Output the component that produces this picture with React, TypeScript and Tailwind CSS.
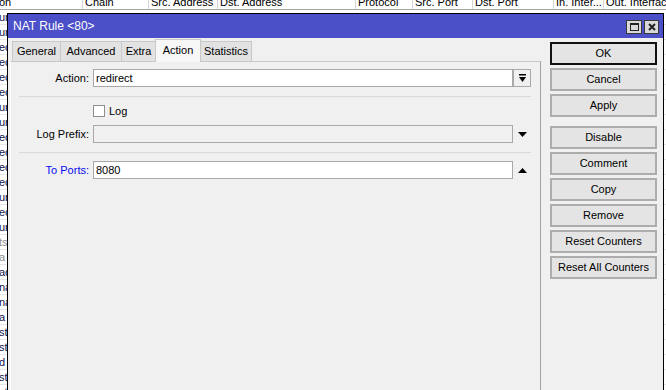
import React from 'react';

const headerCols = [
  { label: 'on', w: 84 },
  { label: 'Chain', w: 66 },
  { label: 'Src. Address', w: 69 },
  { label: 'Dst. Address', w: 138 },
  { label: 'Protocol', w: 57 },
  { label: 'Src. Port', w: 60 },
  { label: 'Dst. Port', w: 81 },
  { label: 'In. Inter...', w: 50 },
  { label: 'Out. Interface', w: 70 },
];

// visible left-edge fragments of the rule list behind the dialog
const rows: { frag: string; chain?: string; off?: boolean }[] = [
  { frag: 'un', chain: 'dstnat' }, { frag: 'un' }, { frag: 'ec' }, { frag: 'ec' }, { frag: 'ec' },
  { frag: 'ec' }, { frag: 'un' }, { frag: 'un' }, { frag: 'ec' }, { frag: 'ec' },
  { frag: 'ec' }, { frag: 'ec' }, { frag: 'un' }, { frag: 'ec' }, { frag: 'un' },
  { frag: 'ts', off: true }, { frag: 'a', off: true }, { frag: 'ac' }, { frag: 'na' }, { frag: 'na' },
  { frag: 'a' }, { frag: 'st' }, { frag: 'st' }, { frag: 'd' }, { frag: 'st' }, { frag: 'st' },
];

const tabs = [
  { label: 'General', w: 'w-[49px]' },
  { label: 'Advanced', w: 'w-[62px]' },
  { label: 'Extra', w: 'w-[35px]' },
  { label: 'Action', w: 'w-[46px]', active: true },
  { label: 'Statistics', w: 'w-[52px]' },
];

function Btn({ label, primary, className = '' }: { label: string; primary?: boolean; className?: string }) {
  return (
    <div
      className={`h-[23px] w-[107px] flex items-center justify-center bg-[#e4e4e4] text-[#000] border-2 ${
        primary ? 'border-[#111]' : 'border-[#adadad]'
      } ${className}`}
    >
      {label}
    </div>
  );
}

function TriDown() {
  return (
    <svg width="9" height="5" viewBox="0 0 9 5">
      <polygon points="0,0 9,0 4.5,5" fill="#000" />
    </svg>
  );
}

function TriUp() {
  return (
    <svg width="9" height="5" viewBox="0 0 9 5">
      <polygon points="0,5 9,5 4.5,0" fill="#000" />
    </svg>
  );
}

export default function App() {
  return (
    <div className="relative w-[666px] h-[390px] overflow-hidden bg-white text-[11px] text-black font-['Liberation_Sans',Arial,sans-serif]">
      {/* rule list behind */}
      <div className="flex h-[10px] overflow-hidden border-b border-[#a5a5a5]">
        {headerCols.map((c, i) => (
          <div
            key={i}
            style={{ width: c.w }}
            className={`shrink-0 border-r border-[#d6d6d6] leading-[13px] -mt-[4px] whitespace-nowrap overflow-hidden ${i === 0 ? '-ml-[1px]' : 'pl-[2px]'}`}
          >
            {c.label}
          </div>
        ))}
      </div>
      {rows.map((r, i) => (
        <div key={i} className="flex h-[15px] items-center border-b border-[#e6e6e6] leading-[13px]">
          <div className={`w-[84px] shrink-0 -ml-[1px] ${r.off ? 'text-[#8c8c8c]' : 'text-[#10104a]'}`}>{r.frag}</div>
          <div className="w-[66px] shrink-0 pl-[2px]">{r.chain ?? ''}</div>
        </div>
      ))}

      {/* dialog window */}
      <div className="absolute left-[7px] top-[13px] w-[657px] h-[400px] border border-black bg-[#f0f0f0] flex flex-col">
        <div className="h-[24px] bg-[#4b4fc8] flex items-center pl-[5px] pr-[4px] text-white text-[12px]">
          <span className="flex-1">NAT Rule &lt;80&gt;</span>
          <div className="flex gap-[2px] mt-[1px]">
            <div className="w-[16px] h-[14px] bg-[#d9d9d9] border border-[#3a3a3a] flex items-center justify-center">
              <div className="w-[9px] h-[8px] border border-[#222] border-t-2" />
            </div>
            <div className="w-[15px] h-[14px] bg-[#d9d9d9] border border-[#3a3a3a] flex items-center justify-center">
              <svg width="8" height="8" viewBox="0 0 8 8">
                <path d="M1 1 L7 7 M7 1 L1 7" stroke="#222" strokeWidth="2" />
              </svg>
            </div>
          </div>
        </div>

        <div className="flex flex-1">
          {/* tab area */}
          <div className="w-[533px] pl-[2px] flex flex-col">
            <div className="h-[23px] flex items-end pl-[2px]">
              {tabs.map((t) =>
                t.active ? (
                  <div
                    key={t.label}
                    className={`${t.w} h-[23px] -mb-[1px] -ml-[1px] relative z-10 flex items-center justify-center bg-[#f7f7f7] border border-b-0 border-[#c8c8c8] pb-[1px]`}
                  >
                    {t.label}
                  </div>
                ) : (
                  <div
                    key={t.label}
                    className={`${t.w} h-[20px] -ml-[1px] first:ml-0 flex items-center justify-center bg-[#e2e2e2] border border-b-0 border-[#c8c8c8]`}
                  >
                    {t.label}
                  </div>
                )
              )}
            </div>
            <div className="flex-1 border-t border-[#c8c8c8] border-l border-l-white border-r border-r-[#a3a3a3] pt-[7px]">
              <div className="flex items-center h-[18px]">
                <div className="w-[78px] text-right">Action:</div>
                <div className="ml-[4px] w-[420px] h-[18px] bg-white border border-[#a8a8a8] flex items-center pl-[2px]">redirect</div>
                <div className="w-[18px] h-[18px] border border-[#a8a8a8] bg-[#f0f0f0] flex items-center justify-center">
                  <svg width="7" height="9" viewBox="0 0 7 9">
                    <rect x="0" y="0" width="7" height="1.5" fill="#000" />
                    <polygon points="0,3 7,3 3.5,8" fill="#000" />
                  </svg>
                </div>
              </div>
              <div className="ml-[8px] mt-[9px] w-[512px] h-px bg-[#d9d9d9]" />
              <div className="flex items-center mt-[8px] h-[12px]">
                <div className="ml-[82px] w-[12px] h-[12px] bg-white border border-[#8f8f8f]" />
                <span className="ml-[4px]">Log</span>
              </div>
              <div className="flex items-center h-[18px] mt-[8px]">
                <div className="w-[78px] text-right">Log Prefix:</div>
                <div className="ml-[4px] w-[420px] h-[18px] bg-[#f0f0f0] border border-[#a8a8a8]" />
                <div className="w-[18px] flex items-center justify-center pl-[1px]">
                  <TriDown />
                </div>
              </div>
              <div className="ml-[8px] mt-[9px] w-[512px] h-px bg-[#d9d9d9]" />
              <div className="flex items-center h-[18px] mt-[8px]">
                <div className="w-[78px] text-right text-[#0a0aee]">To Ports:</div>
                <div className="ml-[4px] w-[420px] h-[18px] bg-white border border-[#a8a8a8] flex items-center pl-[2px]">8080</div>
                <div className="w-[18px] flex items-center justify-center pl-[1px]">
                  <TriUp />
                </div>
              </div>
            </div>
          </div>

          {/* buttons */}
          <div className="ml-[9px] pt-[4px] flex flex-col gap-[3px]">
            <Btn label="OK" primary />
            <Btn label="Cancel" />
            <Btn label="Apply" />
            <Btn label="Disable" className="mt-[6px]" />
            <Btn label="Comment" />
            <Btn label="Copy" />
            <Btn label="Remove" />
            <Btn label="Reset Counters" />
            <Btn label="Reset All Counters" />
          </div>
        </div>
      </div>
    </div>
  );
}
